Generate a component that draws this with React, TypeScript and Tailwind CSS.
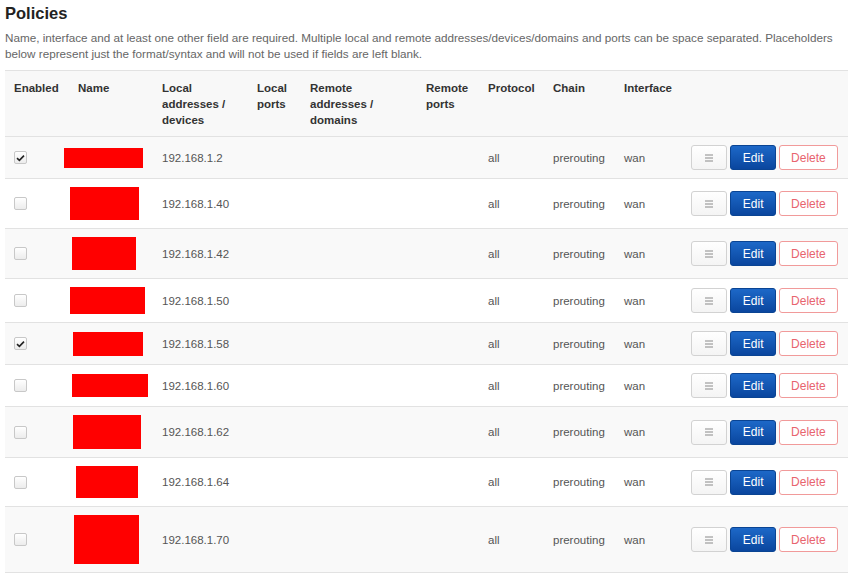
import React from "react";

type Policy = {
  enabled: boolean;
  ip: string;
  // redaction block drawn in place of the name
  mask: string;
};

const policies: Policy[] = [
  { enabled: true, ip: "192.168.1.2", mask: "ml-[-14px] w-[79px] h-[20px]" },
  { enabled: false, ip: "192.168.1.40", mask: "ml-[-8px] w-[69px] h-[33px]" },
  { enabled: false, ip: "192.168.1.42", mask: "ml-[-6px] w-[64px] h-[33px]" },
  { enabled: false, ip: "192.168.1.50", mask: "ml-[-8px] w-[75px] h-[27px]" },
  { enabled: true, ip: "192.168.1.58", mask: "ml-[-5px] w-[70px] h-[24px]" },
  { enabled: false, ip: "192.168.1.60", mask: "ml-[-6px] w-[76px] h-[23px]" },
  { enabled: false, ip: "192.168.1.62", mask: "ml-[-5px] w-[68px] h-[34px]" },
  { enabled: false, ip: "192.168.1.64", mask: "ml-[-2px] w-[62px] h-[32px]" },
  { enabled: false, ip: "192.168.1.70", mask: "ml-[-4px] w-[65px] h-[49px]" },
];

const headers = [
  { label: "Enabled", w: "w-[65px] pl-[9px]" },
  { label: "Name", w: "w-[84px]" },
  { label: "Local addresses / devices", w: "w-[95px]" },
  { label: "Local ports", w: "w-[53px]" },
  { label: "Remote addresses / domains", w: "w-[116px]" },
  { label: "Remote ports", w: "w-[62px]" },
  { label: "Protocol", w: "w-[65px]" },
  { label: "Chain", w: "w-[71px]" },
  { label: "Interface", w: "w-[67px]" },
  { label: "", w: "w-[165px]" },
];

function Checkbox({ checked }: { checked: boolean }) {
  return (
    <div className="flex h-[13px] w-[13px] items-center justify-center rounded-[2px] border border-[#c8c8c8] bg-gradient-to-b from-white to-[#ececec]">
      {checked && (
        <svg width="9" height="8" viewBox="0 0 9 8">
          <path d="M1 4.2 L3.4 6.4 L8 1.6" fill="none" stroke="#222" strokeWidth="1.6" />
        </svg>
      )}
    </div>
  );
}

function Actions() {
  return (
    <div className="flex items-center gap-[3px]">
      <button className="flex h-[25px] w-[37px] items-center justify-center rounded-[3px] border border-[#d2d2d2] bg-gradient-to-b from-white to-[#f4f4f4]">
        <svg width="8" height="8" viewBox="0 0 8 8">
          <path d="M0 1h8M0 4h8M0 7h8" stroke="#8a8a8a" strokeWidth="1" />
        </svg>
      </button>
      <button className="h-[25px] w-[46px] rounded-[3px] border border-[#0a4493] bg-gradient-to-b from-[#1d68c8] to-[#0a469e] text-[12px] text-white">
        Edit
      </button>
      <button className="h-[25px] w-[60px] rounded-[3px] border border-[#f19a9a] bg-white text-[12px] text-[#e8646e]">
        Delete
      </button>
    </div>
  );
}

export default function App() {
  return (
    <div className="min-h-[581px] bg-white px-[5px] font-['Liberation_Sans',Arial,sans-serif] text-[#555]">
      <h2 className="pt-[3px] text-[16.5px] leading-[20px] font-bold text-[#222]">
        Policies
      </h2>
      <p className="mt-[7px] w-[842px] text-[11.7px] leading-[16px] text-[#666]">
        Name, interface and at least one other field are required. Multiple local and
        remote addresses/devices/domains and ports can be space separated. Placeholders
        below represent just the format/syntax and will not be used if fields are left blank.
      </p>
      <table className="mt-[8px] w-[843px] table-fixed border-collapse text-[11.5px] leading-[16px]">
        <thead>
          <tr className="border-y border-[#e2e2e2] bg-[#f8f8f8]">
            {headers.map((h, i) => (
              <th
                key={i}
                className={`${h.w} px-2 pt-[9px] pb-2 text-left align-top font-bold text-[#333]`}
              >
                {h.label}
              </th>
            ))}
          </tr>
        </thead>
        <tbody>
          {policies.map((p, i) => (
            <tr
              key={p.ip}
              className={`border-b border-[#e2e2e2] ${i % 2 === 0 ? "bg-[#f9f9f9]" : "bg-white"}`}
            >
              <td className="py-2 pr-2 pl-[9px] align-middle">
                <Checkbox checked={p.enabled} />
              </td>
              <td className="px-2 py-2 align-middle">
                <div className={`${p.mask} bg-[#ff0000]`} />
              </td>
              <td className="px-2 py-2 align-middle">{p.ip}</td>
              <td className="px-2 py-2" />
              <td className="px-2 py-2" />
              <td className="px-2 py-2" />
              <td className="px-2 py-2 align-middle">all</td>
              <td className="px-2 py-2 align-middle">prerouting</td>
              <td className="px-2 py-2 align-middle">wan</td>
              <td className="py-2 pr-[10px] pl-2 align-middle">
                <Actions />
              </td>
            </tr>
          ))}
        </tbody>
      </table>
    </div>
  );
}
